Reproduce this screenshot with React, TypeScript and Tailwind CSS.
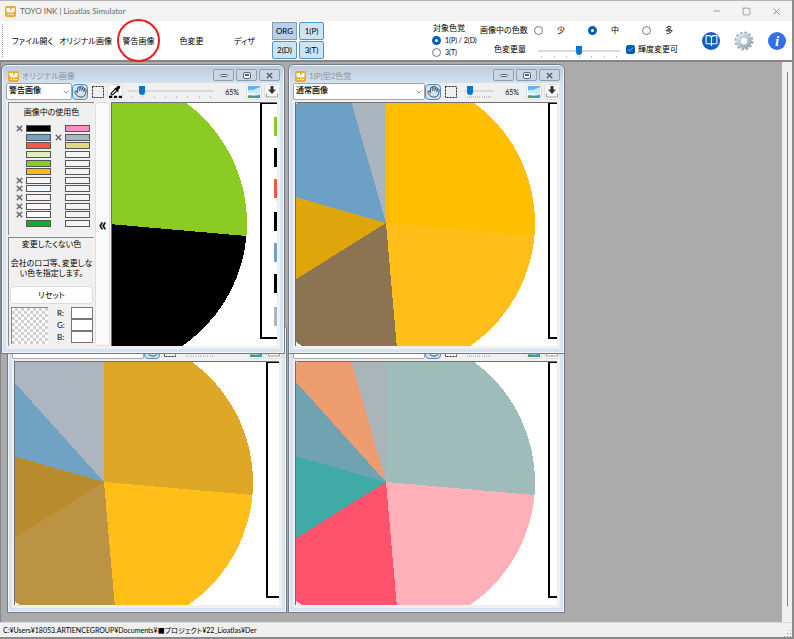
import React from "react";
import clsx from "clsx";
import { BookOpen, Check, ChevronDown, Hand, Minus, Square, X } from "lucide-react";

type Slice = { from: number; to: number; color: string };

const MENU = ["ファイル開く", "オリジナル画像", "警告画像", "色変更", "ディザ"];

const LEFT_COLORS = [
  { color: "#000000", locked: true },
  { color: "#74a0c8" },
  { color: "#fc5643" },
  { color: "#e0efbb" },
  { color: "#8cca24" },
  { color: "#fdba15" },
  { color: "#f6f6f6", locked: true },
  { color: "#f0f7ff", locked: true },
  { color: "#fdeef8", locked: true },
  { color: "#fcf5fc", locked: true },
  { color: "#ffffff", locked: true },
  { color: "#08b02e" },
];

const RIGHT_COLORS = [
  { color: "#f88fc4" },
  { color: "#abb5c3", locked: true },
  { color: "#e0da7c" },
  ...Array.from({ length: 9 }, () => ({ color: "#f3f3f3" })),
];

// angles run clockwise from twelve o'clock
const ORIGINAL: Slice[] = [
  { from: 0, to: 95, color: "#8cca24" },
  { from: 95, to: 360, color: "#000000" },
];

const TYPE_P: Slice[] = [
  { from: 0, to: 95, color: "#ffbf00" },
  { from: 95, to: 175, color: "#ffbe18" },
  { from: 175, to: 238, color: "#8c7452" },
  { from: 238, to: 286, color: "#dfa60c" },
  { from: 286, to: 344, color: "#6ca0c6" },
  { from: 344, to: 360, color: "#abb5c0" },
];

const TYPE_D: Slice[] = [
  { from: 0, to: 95, color: "#dea826" },
  { from: 95, to: 175, color: "#ffbe18" },
  { from: 175, to: 238, color: "#bc9343" },
  { from: 238, to: 286, color: "#b88b2c" },
  { from: 286, to: 318, color: "#70a2c4" },
  { from: 318, to: 344, color: "#adb6c0" },
  { from: 344, to: 360, color: "#abb6be" },
];

const TYPE_T: Slice[] = [
  { from: 0, to: 95, color: "#9dbcba" },
  { from: 95, to: 175, color: "#ffb0b9" },
  { from: 175, to: 238, color: "#ff526d" },
  { from: 238, to: 286, color: "#40aba6" },
  { from: 286, to: 318, color: "#70a3b1" },
  { from: 318, to: 344, color: "#ed9d70" },
  { from: 344, to: 360, color: "#a9b5b9" },
];

const LEGEND = [
  { y: 14, color: "#8cca24" },
  { y: 45, color: "#000000" },
  { y: 76, color: "#fc5643" },
  { y: 109, color: "#000000" },
  { y: 140, color: "#74a0c8" },
  { y: 171, color: "#000000" },
  { y: 204, color: "#abb5c0" },
];

const RADIUS = 149;

const slicePath = (cx: number, cy: number, { from, to }: Slice) => {
  const point = (deg: number) => {
    const rad = (deg * Math.PI) / 180;
    return `${cx + RADIUS * Math.sin(rad)} ${cy - RADIUS * Math.cos(rad)}`;
  };
  const large = to - from > 180 ? 1 : 0;
  return `M${cx} ${cy}L${point(from)}A${RADIUS} ${RADIUS} 0 ${large} 1 ${point(to)}Z`;
};

const PieImage: React.FC<{ cx: number; slices: Slice[]; frameX: number; legend?: boolean }> = ({
  cx,
  slices,
  frameX,
  legend,
}) => (
  <div className="min-w-0 flex-1 overflow-hidden border-t border-l border-[#6f6f6f] bg-white">
    <svg className="block h-full w-full" shapeRendering="crispEdges">
      {slices.map((slice) => (
        <path key={slice.from} d={slicePath(cx, 120, slice)} fill={slice.color} />
      ))}
      <rect x={frameX} y="0" width="200" height="235" fill="none" stroke="#000" strokeWidth="2" />
      {legend &&
        LEGEND.map(({ y, color }) => (
          <rect key={y} x={frameX + 13} y={y} width="20" height="19" fill={color} />
        ))}
    </svg>
  </div>
);

const AppLogo = () => (
  <svg viewBox="0 0 22 22" className="size-[11px] shrink-0">
    <rect width="22" height="22" rx="4" fill="#efaa2b" />
    <path d="M3 4h7v4l3-4h6v6c0 2-2 3-4 3H8c-3 0-5-2-5-4Z" fill="#fff" />
    <circle cx="12" cy="6" r="2" fill="#efaa2b" />
    <path d="M5 17h3m2 0h3m2 0h3" stroke="#fff" strokeWidth="2" />
  </svg>
);

const PictureIcon = () => (
  <svg viewBox="0 0 24 24" className="size-[12px]">
    <rect width="24" height="24" fill="#5fb2f0" />
    <path d="M0 10c5-5 8 0 12-3s7-3 12-4v11H0Z" fill="#c5ecfb" />
    <path d="M0 14c8-2 16 3 24-1v6H0Z" fill="#e4f8fc" />
    <path d="M0 20c6-3 10 3 24-3v7H0Z" fill="#4795a8" />
    <path d="M0 20c4-3 7 1 10 1l-2 3H0Z" fill="#54995c" />
  </svg>
);

const DownloadIcon = () => (
  <svg viewBox="0 0 24 24" className="size-[12px]">
    <path d="M9 0h6v7h5l-8 9-8-9h5Z" fill="#333" />
    <path d="M1 15v7h22v-7" fill="none" stroke="#999" strokeWidth="2" />
  </svg>
);

const MarqueeIcon = () => (
  <svg viewBox="0 0 12 12" className="size-[12px]">
    <rect x="0.5" y="0.5" width="11" height="11" fill="none" stroke="#222" strokeDasharray="2 1" />
  </svg>
);

const DropperIcon = () => (
  <svg viewBox="0 0 24 24" className="size-[13px]">
    <path d="m13 5 3-3c3-2 6 1 4 4l-3 3 1 2-2 2-6-6 2-2Z" fill="#000" />
    <path d="m11 8-7 7v3h3l7-7" fill="none" stroke="#000" strokeWidth="2" />
    <path d="M0 22h6m3 0h6m3 0h6" stroke="#000" strokeWidth="4" />
  </svg>
);

const GearIcon = () => (
  <svg viewBox="0 0 40 40" className="size-[20px]">
    <defs>
      <linearGradient id="gear" x1="0" y1="0" x2="1" y2="1">
        <stop offset="0" stopColor="#dde5eb" />
        <stop offset="1" stopColor="#94a6b5" />
      </linearGradient>
    </defs>
    <circle cx="20" cy="20" r="16.5" fill="none" stroke="#9fb0bd" strokeWidth="5" strokeDasharray="5.2 3.44" />
    <circle cx="20" cy="20" r="11.5" fill="none" stroke="url(#gear)" strokeWidth="8" />
    <circle cx="20" cy="20" r="7.5" fill="#fff" stroke="#8799a7" />
  </svg>
);

const Slider: React.FC<{ label: string; value: number; ticks: number; className: string }> = ({
  label,
  value,
  ticks,
  className,
}) => (
  <div className={clsx("flex flex-col", className)}>
    <input
      type="range"
      aria-label={label}
      defaultValue={value}
      className="block h-[10px] w-full appearance-none bg-transparent [&::-webkit-slider-runnable-track]:h-[2px] [&::-webkit-slider-runnable-track]:bg-[#dadada] [&::-webkit-slider-thumb]:-mt-[4px] [&::-webkit-slider-thumb]:h-[9px] [&::-webkit-slider-thumb]:w-[6px] [&::-webkit-slider-thumb]:appearance-none [&::-webkit-slider-thumb]:rounded-b-sm [&::-webkit-slider-thumb]:bg-[#0078d7]"
    />
    <div className="mx-[3px] flex justify-between">
      {Array.from({ length: ticks }, (_, i) => (
        <span key={i} className="h-[2px] w-px bg-[#c4c4c4]" />
      ))}
    </div>
  </div>
);

const Radio: React.FC<{ name: string; label: string; checked?: boolean; className?: string }> = ({
  name,
  label,
  checked,
  className,
}) => (
  <label className={clsx("flex items-center", className)}>
    <input
      type="radio"
      name={name}
      defaultChecked={checked}
      className="size-[9px] shrink-0 appearance-none rounded-full border border-[#777] bg-white checked:border-3 checked:border-[#005fb8]"
    />
    {label}
  </label>
);

const ToolButton: React.FC<{ label: string; active?: boolean; plain?: boolean; children: React.ReactNode }> = ({
  label,
  active,
  plain,
  children,
}) => (
  <button
    aria-label={label}
    className={clsx(
      "flex size-[16px] shrink-0 items-center justify-center rounded-sm border",
      active && "border-[#4a8fca] bg-[#cce4f7]",
      plain && "border-transparent",
      !active && !plain && "border-[#dcdcdc] bg-[#fcfcfc]"
    )}
  >
    {children}
  </button>
);

const CaptionButton: React.FC<{ label: string; children: React.ReactNode }> = ({ label, children }) => (
  <button
    aria-label={label}
    className="flex h-[12px] w-[21px] items-center justify-center rounded-xs border border-[#8e9dae] bg-[#c9d6e4] text-[#5b6470]"
  >
    {children}
  </button>
);

type ImageWindowProps = {
  title: string;
  mode: string;
  position: string;
  dropper?: boolean;
  zoomTicks: number;
  children: React.ReactNode;
};

const ImageWindow: React.FC<ImageWindowProps> = ({ title, mode, position, dropper, zoomTicks, children }) => (
  <section
    className={clsx(
      "absolute flex h-[290px] flex-col rounded-t-md border border-[#747b84] bg-linear-to-b from-[#bccbd9] to-[#d6e3f2] to-[20px] px-[4px] pb-[4px] shadow-[inset_0_0_0_1px_#eef4fa]",
      position
    )}
  >
    <header className="flex h-[18px] shrink-0 items-end justify-between">
      <h2 className="flex items-center gap-[3px] pb-px pl-[2px] text-[#8d949b]">
        <AppLogo />
        {title}
      </h2>
      <div className="flex gap-[2px] pb-[2px]">
        <CaptionButton label="最小化">
          <span className="h-[3px] w-[8px] rounded-xs border border-current bg-white" />
        </CaptionButton>
        <CaptionButton label="最大化">
          <span className="flex h-[7px] w-[8px] items-center justify-center rounded-xs border border-current bg-white">
            <span className="h-[2px] w-[4px] bg-current" />
          </span>
        </CaptionButton>
        <CaptionButton label="閉じる">
          <X size={9} strokeWidth={4} />
        </CaptionButton>
      </div>
    </header>
    <div className="flex min-h-0 flex-1 flex-col bg-[#f0f0f0]">
      <div className="flex h-[19px] shrink-0 items-center pb-[2px]">
        <div className={clsx("relative shrink-0", dropper ? "w-[66px]" : "w-[132px]")}>
          <select
            aria-label="表示画像"
            className="block h-[17px] w-full appearance-none rounded-xs border border-[#a5a5a5] bg-white pb-[3px] pl-[2px] font-medium text-black"
          >
            <option>{mode}</option>
          </select>
          <ChevronDown size={8} className="pointer-events-none absolute top-[5px] right-[2px] text-[#555]" />
        </div>
        <ToolButton label="移動" active>
          <Hand size={13} strokeWidth={1.5} className="rotate-12 text-[#333]" />
        </ToolButton>
        <div className="ml-[2px] flex gap-px">
          <ToolButton label="範囲選択" plain>
            <MarqueeIcon />
          </ToolButton>
          {dropper && (
            <ToolButton label="スポイト">
              <DropperIcon />
            </ToolButton>
          )}
        </div>
        <Slider
          label="表示倍率"
          value={dropper ? 14 : 12}
          ticks={zoomTicks}
          className="mr-[7px] ml-[5px] min-w-0 flex-1"
        />
        <span className="w-[22px] text-center text-[7px] text-black">65%</span>
        <div className="ml-[3px] flex gap-[2px]">
          <ToolButton label="画像">
            <PictureIcon />
          </ToolButton>
          <ToolButton label="保存">
            <DownloadIcon />
          </ToolButton>
        </div>
      </div>
      <div className="flex min-h-0 flex-1 gap-px pr-[3px] pb-[3px] pl-[2px]">{children}</div>
    </div>
  </section>
);

const SwatchColumn: React.FC<{ colors: { color: string; locked?: boolean }[] }> = ({ colors }) => (
  <ul className="flex h-[102px] flex-col justify-between">
    {colors.map(({ color, locked }, i) => (
      <li key={i} className="flex h-[7px] items-center">
        <span className="flex w-[11px]">{locked && <X size={9} strokeWidth={4} className="text-[#666]" />}</span>
        <span className="h-[7px] w-[25px] border border-[#555]" style={{ backgroundColor: color }} />
      </li>
    ))}
  </ul>
);

const ColorPanel = () => (
  <>
    <div className="flex w-[86px] shrink-0 flex-col gap-[2px] text-black">
      <div className="h-[133px] border-t border-l border-[#8a8a8a]">
        <h3 className="pt-[3px] text-center leading-[12px]">画像中の使用色</h3>
        <div className="mt-[7px] flex gap-[3px] pl-[6px]">
          <SwatchColumn colors={LEFT_COLORS} />
          <SwatchColumn colors={RIGHT_COLORS} />
        </div>
      </div>
      <div className="flex flex-1 flex-col border-t border-l border-[#8a8a8a] px-px pb-[2px]">
        <h3 className="text-center leading-[12px]">変更したくない色</h3>
        <p className="mt-[8px] text-center leading-[10px]">
          会社のロゴ等、変更しな
          <br />
          い色を指定します。
        </p>
        <button className="mt-[8px] h-[18px] rounded-sm border border-[#dcdcdc] bg-[#fdfdfd]">リセット</button>
        <div className="mt-[3px] flex justify-between pl-px">
          <div className="size-[37px] border-t border-l border-[#888] bg-[repeating-conic-gradient(#d0d0d0_0_25%,#fff_0_50%)] bg-size-[6px_6px]" />
          <div className="flex flex-col">
            {["R:", "G:", "B:"].map((name) => (
              <label key={name} className="flex h-[12px] items-center gap-[6px] leading-[10px]">
                <span className="w-[8px]">{name}</span>
                <input type="text" className="h-[12px] w-[22px] border border-[#777] bg-white" />
              </label>
            ))}
          </div>
        </div>
      </div>
    </div>
    <button
      aria-label="パネルを閉じる"
      className="w-[15px] shrink-0 rounded-sm border border-[#dedede] bg-[#fafafa] text-[18px] font-bold text-black"
    >
      «
    </button>
  </>
);

const TitleBar = () => (
  <header className="flex h-[21px] shrink-0 items-center justify-between border-t border-[#b5b5b5] bg-[#f3f3f3] pr-[10px] pl-[5px] text-[#666]">
    <h1 className="flex items-center gap-[4px]">
      <AppLogo />
      TOYO INK | Lioatlas Simulator
    </h1>
    <div className="flex gap-[20px] text-[#888]">
      <button aria-label="最小化">
        <Minus size={10} />
      </button>
      <button aria-label="最大化">
        <Square size={9} />
      </button>
      <button aria-label="閉じる">
        <X size={11} />
      </button>
    </div>
  </header>
);

const VisionButton: React.FC<{ label: string; selected?: boolean }> = ({ label, selected }) => (
  <button
    className={clsx(
      "h-[18px] border",
      selected ? "border-[#8c9aad] bg-[#b5cfec]" : "rounded-xs border-[#4f94cd] bg-[#cce4f7]"
    )}
  >
    {label}
  </button>
);

const Toolbar = () => (
  <div className="flex h-[41px] shrink-0 border-b-2 border-[#868686] bg-white pr-[6px] pl-[2px] text-black">
    <div className="my-[3px] w-[4px] border-l border-dotted border-[#999]" />
    <nav className="flex">
      {MENU.map((item) => (
        <button key={item} className="relative w-[53px] whitespace-nowrap">
          {item}
          {item === "警告画像" && (
            <span className="absolute -top-[2px] left-[5px] size-[43px] rounded-full border-2 border-[#ee1c1c]" />
          )}
        </button>
      ))}
    </nav>
    <div className="mt-px ml-px grid grid-cols-[25px_25px] content-start gap-x-[2px] gap-y-px">
      <VisionButton label="ORG" selected />
      <VisionButton label="1(P)" />
      <VisionButton label="2(D)" />
      <VisionButton label="3(T)" />
    </div>
    <div className="flex flex-1 justify-end">
      <fieldset className="mt-px flex w-[48px] flex-col whitespace-nowrap">
        <legend className="pl-px leading-[12px]">対象色覚</legend>
        <Radio name="vision" label="1(P) / 2(D)" checked className="h-[12px] gap-[4px] text-[7px]" />
        <Radio name="vision" label="3(T)" className="h-[12px] gap-[4px] text-[7px]" />
      </fieldset>
      <div className="flex w-[202px] flex-col">
        <div className="flex h-[18px] items-center">
          <span className="w-[54px] pr-[8px] text-right whitespace-nowrap">画像中の色数</span>
          <div className="flex gap-[16px]">
            <Radio name="count" label="少" className="w-[38px] gap-[14px]" />
            <Radio name="count" label="中" checked className="w-[38px] gap-[14px]" />
            <Radio name="count" label="多" className="w-[38px] gap-[14px]" />
          </div>
        </div>
        <div className="flex h-[20px] items-center">
          <span className="w-[54px] pr-[8px] text-right whitespace-nowrap">色変更量</span>
          <Slider label="色変更量" value={50} ticks={7} className="ml-[4px] w-[82px] pt-[5px]" />
          <label className="ml-[6px] flex items-center gap-[3px] whitespace-nowrap">
            <span className="relative flex">
              <input
                type="checkbox"
                defaultChecked
                className="size-[9px] appearance-none rounded-xs border border-[#777] checked:border-[#005fb8] checked:bg-[#005fb8]"
              />
              <Check size={7} className="pointer-events-none absolute top-px left-px text-white" />
            </span>
            輝度変更可
          </label>
        </div>
      </div>
      <div className="ml-[20px] flex items-center gap-[14px]">
        <button
          aria-label="マニュアル"
          className="flex size-[18px] items-center justify-center rounded-full bg-[#1261b8] text-white"
        >
          <BookOpen size={13} strokeWidth={2} />
        </button>
        <button aria-label="設定">
          <GearIcon />
        </button>
        <button
          aria-label="情報"
          className="flex size-[18px] items-center justify-center rounded-full bg-[#336df0] font-['Liberation_Serif',serif] text-[15px] font-bold text-white italic"
        >
          i
        </button>
      </div>
    </div>
  </div>
);

export default function App() {
  return (
    <div className="flex min-h-screen flex-col border-r-2 border-b-2 border-[#8a8a8a] bg-[#f0f0f0] font-['Lato','Noto_Sans_CJK_JP',sans-serif] text-[8px] leading-[12px] [font-feature-settings:'palt']">
      <TitleBar />
      <Toolbar />
      <main className="flex flex-1">
        <div className="relative flex-1 overflow-hidden border-l border-[#888] bg-[#ababab]">
          <ImageWindow title="2(D)型2色覚" mode="通常画像" position="left-[6px] top-[261px] w-[280px]" zoomTicks={12}>
            <PieImage cx={89} slices={TYPE_D} frameX={252} />
          </ImageWindow>
          <ImageWindow title="3(T)型2色覚" mode="通常画像" position="left-[287px] top-[261px] w-[277px]" zoomTicks={12}>
            <PieImage cx={90} slices={TYPE_T} frameX={253} />
          </ImageWindow>
          <ImageWindow
            title="オリジナル画像"
            mode="警告画像"
            position="left-0 top-[2px] w-[284px]"
            zoomTicks={8}
            dropper
          >
            <ColorPanel />
            <PieImage cx={-14} slices={ORIGINAL} frameX={149} legend />
          </ImageWindow>
          <ImageWindow title="1(P)型2色覚" mode="通常画像" position="left-[287px] top-[2px] w-[277px]" zoomTicks={12}>
            <PieImage cx={90} slices={TYPE_P} frameX={253} />
          </ImageWindow>
        </div>
        <div className="flex w-[10px] justify-center py-[10px] pb-[16px]">
          <div className="w-px bg-[#858585]" />
        </div>
      </main>
      <footer className="flex h-[15px] shrink-0 items-center justify-between border-t border-[#d8d8d8] pl-[3px] text-[7px] text-black">
        <span>C:¥Users¥18053.ARTIENCEGROUP¥Documents¥■プロジェクト¥22_Lioatlas¥Der</span>
        <svg viewBox="0 0 8 8" className="size-[8px] self-end">
          <path d="M6 1h1v1H6zM3 4h1v1H3zM6 4h1v1H6zM0 7h1v1H0zM3 7h1v1H3zM6 7h1v1H6z" fill="#999" />
        </svg>
      </footer>
    </div>
  );
}
